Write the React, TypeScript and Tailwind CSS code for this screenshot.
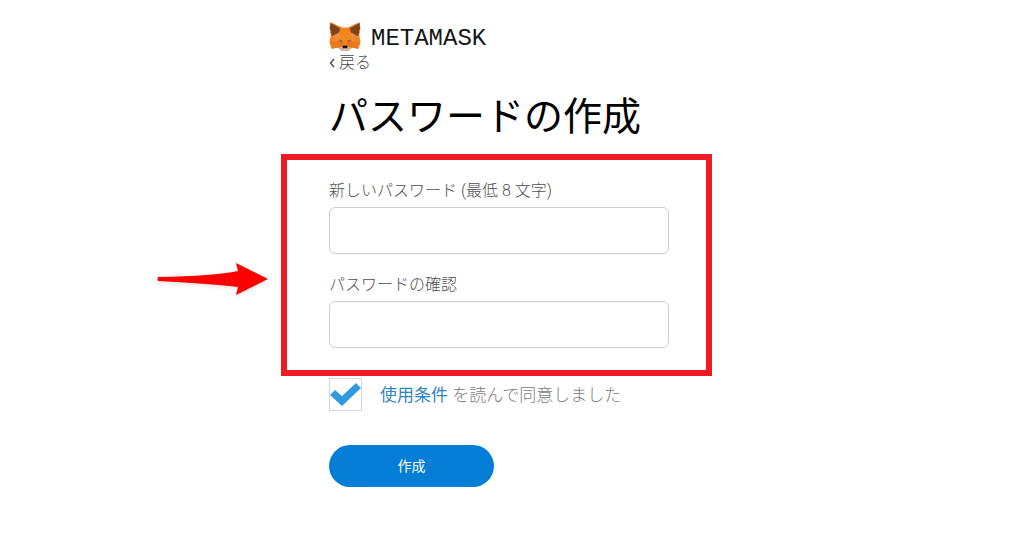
import { useState } from "react";

function FoxLogo() {
  return (
    <svg viewBox="0 0 96 88" className="h-[29px] w-8" aria-hidden="true">
      <path d="M4 1 39 17H57L92 1 95 20 91 41 95 60 88 81 70 77 59 87H37L26 77 8 81 1 60 5 41 1 20Z" fill="#f08423" />
      <path d="M4 1 40 26 34 17ZM92 1 56 26 62 17Z" fill="#e2761b" />
      <path d="M4 3 33 20 30 32 11 42 5 40 8 36 4 32 7 28 2 20Z" fill="#7d431c" />
      <path d="M92 3 63 20 66 32 85 42 91 40 88 36 92 32 89 28 94 20Z" fill="#7d431c" />
      <path d="M37 18H59L55 48 53 70H43L41 48Z" fill="#f6851b" />
      <path d="M11 44 30 32 41 56 24 58ZM85 44 66 32 55 56 72 58Z" fill="#ee8d37" />
      <path d="M24 58 41 56 43 72ZM72 58 55 56 53 72Z" fill="#dd7120" />
      <path d="M29 52 39 56 38 60 32 58ZM67 52 57 56 58 60 64 58Z" fill="#8a5a3a" />
      <path d="M1 60H24L27 77 8 81ZM95 60H72L69 77 88 81Z" fill="#e97a1e" />
      <path d="M24 60 43 72 38 78 26 77ZM72 60 53 72 58 78 70 77Z" fill="#e5781f" />
      <path d="M30 78 38 75H58L66 78 59 87H37Z" fill="#d0bcaa" />
      <path d="M42 71H54L56 80H40Z" fill="#161616" />
    </svg>
  );
}

function Arrow() {
  return (
    <svg viewBox="0 0 112 36" className="h-9 w-28 drop-shadow-sm" aria-hidden="true">
      <path d="M1 15Q57 14 81 9L79 1 111 17 79 33 81 25Q57 22 1 19Q0 17 1 15Z" fill="#fe0000" />
    </svg>
  );
}

interface PasswordFieldProps {
  id: string;
  label: string;
}

function PasswordField({ id, label }: PasswordFieldProps) {
  return (
    <div className="flex flex-col">
      <label htmlFor={id} className="text-base leading-8 text-[#505050]">
        {label}
      </label>
      <input
        id={id}
        type="password"
        className="h-[47px] w-full rounded-md border border-[#cecece] bg-white px-4 outline-none focus:border-[#037dd6]"
      />
    </div>
  );
}

export default function App() {
  const [agreed, setAgreed] = useState(true);

  return (
    <main className="min-h-screen bg-white px-4 py-[22px] font-['Roboto','Noto_Sans_CJK_JP',sans-serif] font-light">
      <div className="mx-auto max-w-[366px]">
        <header className="flex items-end gap-[10px]">
          <FoxLogo />
          <span className="font-['Liberation_Mono',monospace] text-2xl leading-6 font-normal text-[#161616]">METAMASK</span>
        </header>
        <a href="#" className="flex w-fit items-center gap-1 text-base leading-6 text-[#4a4a4a]">
          <svg viewBox="0 0 6 10" className="h-[10px] w-[6px]" fill="none" stroke="currentColor" strokeWidth="1.4" aria-hidden="true">
            <path d="M5 1 1.5 5 5 9" />
          </svg>
          戻る
        </a>
        <h1 className="mt-[14px] text-[39px] leading-[56px] font-normal whitespace-nowrap text-black">パスワードの作成</h1>

        <form onSubmit={(e) => e.preventDefault()}>
          <div className="relative mt-[30px] max-w-[340px]">
            <div className="flex flex-col gap-[15px]">
              <PasswordField id="new-password" label="新しいパスワード (最低 8 文字)" />
              <PasswordField id="confirm-password" label="パスワードの確認" />
            </div>
            {/* highlight around both fields */}
            <div className="pointer-events-none absolute -top-[21px] -right-[43px] -bottom-7 -left-12 border-6 border-[#ed1c24]" />
            <div className="pointer-events-none absolute top-[87px] -left-[172px]">
              <Arrow />
            </div>
          </div>

          <div className="mt-[30px] flex items-center gap-[18px]">
            <div className="relative h-[33px] w-[33px] shrink-0">
              <input
                id="terms"
                type="checkbox"
                checked={agreed}
                onChange={(e) => setAgreed(e.target.checked)}
                className="block h-full w-full appearance-none border border-[#d6d6d6] bg-white"
              />
              {agreed && (
                <svg viewBox="0 0 33 33" className="pointer-events-none absolute inset-0" aria-hidden="true">
                  <path d="M1 17 6 12 13 18 27 5 32 10 13 28Z" fill="#2f9ae0" />
                </svg>
              )}
            </div>
            <label htmlFor="terms" className="text-[17px] leading-6 text-[#7c7c7c]">
              <a href="#" className="font-normal text-[#2f84c2]">
                使用条件
              </a>{" "}
              を読んで同意しました
            </label>
          </div>

          <button type="submit" className="mt-[34px] h-[42px] w-[165px] rounded-full bg-[#037dd6] text-sm font-normal text-white">
            作成
          </button>
        </form>
      </div>
    </main>
  );
}
